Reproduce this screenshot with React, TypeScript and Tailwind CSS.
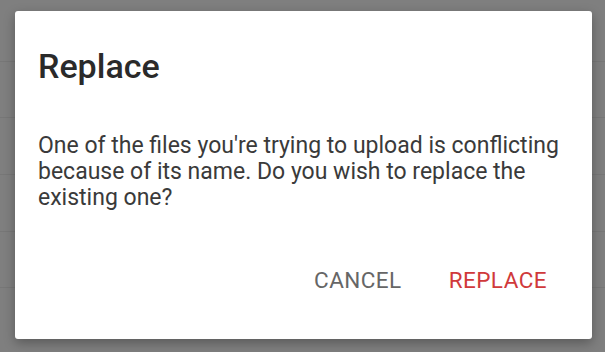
import React from "react";

export default function App() {
  return (
    <div className="w-[605px] h-[352px] bg-[#7f7f7f] relative overflow-hidden" style={{ fontFamily: "Roboto, 'Liberation Sans', sans-serif" }}>
      <div className="absolute inset-0 flex flex-col">
        <div className="h-[62px] border-b border-[#777]" />
        <div className="h-[56px] border-b border-[#777]" />
        <div className="h-[57px] border-b border-[#777]" />
        <div className="h-[57px] border-b border-[#777]" />
        <div className="h-[56px] border-b border-[#777]" />
      </div>
      <div className="absolute left-[15px] top-[11px] w-[577px] h-[328px] bg-white rounded-[3px] shadow-[0_4px_12px_rgba(0,0,0,0.3)] flex flex-col">
        <div className="pl-[23px] pt-[38px] text-[34px] leading-none font-medium text-[#2a2a2a]">Replace</div>
        <div className="pl-[23px] pr-[10px] pt-[50px] text-[23px] leading-[26px] text-[#3a3a3a]">
          One of the files you're trying to upload is conflicting because of its name. Do you wish to replace the existing one?
        </div>
        <div className="mt-auto mb-[48px] flex justify-end pr-[45px] gap-[47px] text-[22.5px] leading-none tracking-[0.02em]">
          <span className="text-[#666]">CANCEL</span>
          <span className="text-[#d0393b]">REPLACE</span>
        </div>
      </div>
    </div>
  );
}
